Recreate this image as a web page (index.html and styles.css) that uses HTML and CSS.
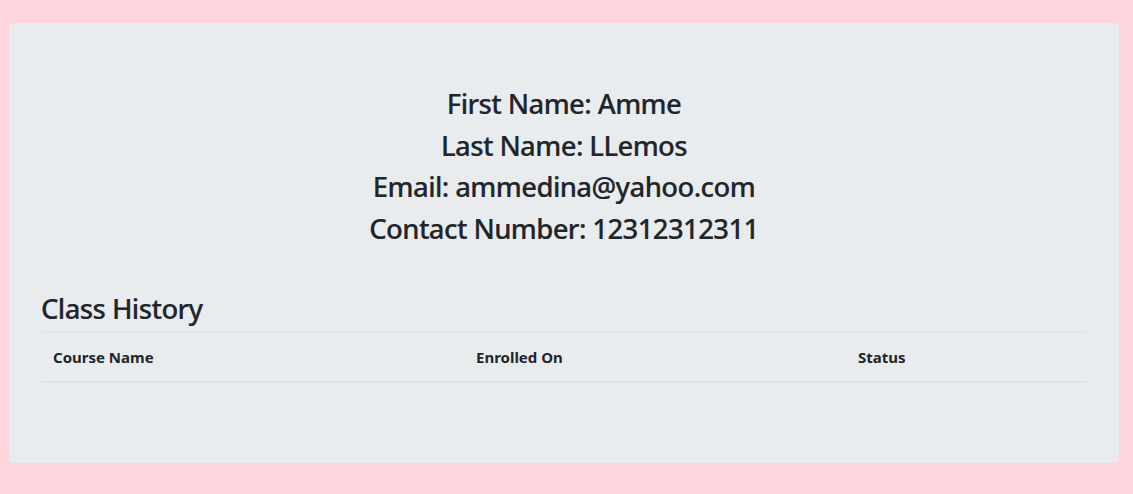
FILE: index.html
```html
<!DOCTYPE html>
<html lang="en">
<head>
<meta charset="utf-8">
<title>Student Profile</title>
<link rel="stylesheet" href="styles.css">
</head>
<body>
<div class="page">
  <section class="jumbotron">
    <div class="profile">
      <h3 class="profile-line">First Name: Amme</h3>
      <h3 class="profile-line">Last Name: LLemos</h3>
      <h3 class="profile-line">Email: ammedina@yahoo.com</h3>
      <h3 class="profile-line">Contact Number: 12312312311</h3>
    </div>
    <h3 class="section-title">Class History</h3>
    <table class="history-table">
      <thead>
        <tr>
          <th class="col-course">Course Name</th>
          <th class="col-enrolled">Enrolled On</th>
          <th class="col-status">Status</th>
        </tr>
      </thead>
      <tbody></tbody>
    </table>
  </section>
</div>
</body>
</html>
```
FILE: styles.css
```css
html, body {
  margin: 0;
  padding: 0;
}
body {
  background: #ffd5dd;
  font-family: "Noto Sans", "Open Sans", "Liberation Sans", sans-serif;
  color: #212529;
}
.page {
  padding: 23px 14px 31px 9px;
}
.jumbotron {
  background: #e9ecef;
  border-radius: 5px;
  padding: 64px 32px;
}
.profile {
  text-align: center;
}
.profile-line,
.section-title {
  font-size: 27.5px;
  font-weight: 500;
  letter-spacing: -0.6px;
  line-height: 33.6px;
  margin: 0 0 8px 0;
  -webkit-text-stroke: 0.2px #212529;
}
.section-title {
  margin-top: 47px;
  margin-bottom: 6px;
  text-align: left;
}
.history-table {
  width: 100%;
  border-collapse: collapse;
  margin-bottom: 16px;
}
.history-table th {
  text-align: left;
  font-size: 15px;
  font-weight: 700;
  line-height: 24px;
  padding: 12px;
  border-top: 1px solid #dee2e6;
  border-bottom: 2px solid #dee2e6;
}
.col-course { width: 399px; }
.col-enrolled { width: 358px; }
```
